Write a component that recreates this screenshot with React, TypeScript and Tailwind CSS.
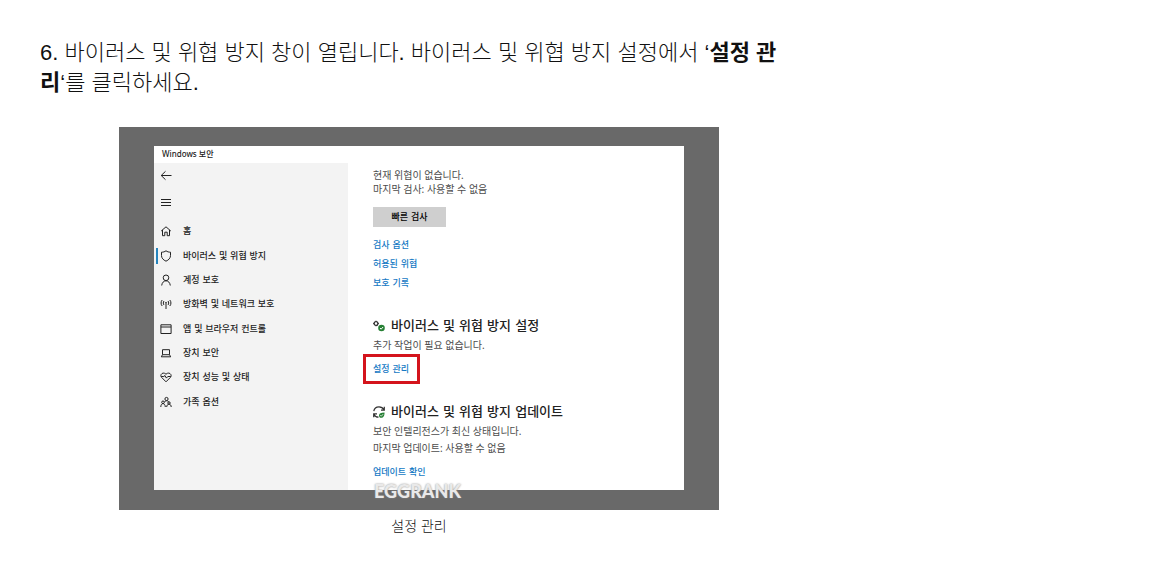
import React from 'react';

interface NavItem {
    label: string;
    icon: React.ReactNode;
    active?: boolean;
}

const Icon: React.FC<{ children: React.ReactNode }> = ({ children }) => (
    <svg
        viewBox="0 0 12 12"
        className="h-3 w-3 shrink-0"
        fill="none"
        stroke="currentColor"
        strokeWidth="1"
        aria-hidden="true"
    >
        {children}
    </svg>
);

const navItems: NavItem[] = [
    { label: '홈', icon: <Icon><path d="M1.2 6 6 1.8 10.8 6M2.5 5v5.7h2.3V7.2h2.4v3.5h2.3V5" /></Icon> },
    {
        label: '바이러스 및 위협 방지',
        active: true,
        icon: <Icon><path d="M6 .8c1.4 1 2.8 1.4 4.5 1.4v3.3c0 2.6-1.8 4.5-4.5 5.7-2.7-1.2-4.5-3.1-4.5-5.7V2.2C3.2 2.2 4.6 1.8 6 .8Z" /></Icon>,
    },
    { label: '계정 보호', icon: <Icon><circle cx="6" cy="3.8" r="2.8" /><path d="M1.7 11.5c.3-2.8 2-4.7 4.3-4.7s4 1.9 4.3 4.7" /></Icon> },
    {
        label: '방화벽 및 네트워크 보호',
        icon: <Icon><path d="M2.2 2C.7 3.5.7 6.5 2.2 8M4 3c-.9 1.2-.9 3 0 4M9.8 2c1.5 1.5 1.5 4.5 0 6M8 3c.9 1.2.9 3 0 4M6 5.5V11" /><circle cx="6" cy="4.8" r=".5" /></Icon>,
    },
    { label: '앱 및 브라우저 컨트롤', icon: <Icon><path d="M.9 1.8h10.2v8.7H.9ZM.9 4h10.2" /></Icon> },
    { label: '장치 보안', icon: <Icon><path d="M2.5 2.7h7v5h-7ZM1.2 9.8h9.6M2.5 7.7 1.3 9.8M9.5 7.7l1.2 2.1" /></Icon> },
    {
        label: '장치 성능 및 상태',
        icon: <Icon><path d="M6 10.8 1.5 6.3C-.5 3.8 2.8.2 6 3.2c3.2-3 6.5.6 4.5 3.1ZM1.2 5.5h2.6l1.2-1 1.4 2.6 1.4-1.6h3" /></Icon>,
    },
    {
        label: '가족 옵션',
        icon: <Icon><circle cx="6.5" cy="3" r="1.6" /><circle cx="3" cy="6.3" r="1.3" /><circle cx="9" cy="7" r="1.2" /><path d="M.8 11c0-2 .9-3.4 2.2-3.4S5.3 9 5.3 11M4.6 6.2c.5-1 1.1-1.5 1.9-1.5 1.2 0 2 .7 2.4 1.5M6.7 11c0-1.8 1-2.8 2.3-2.8s2.2 1 2.2 2.8" /></Icon>,
    },
];

const linkClass = "self-start text-[9px] leading-[19px] font-medium text-[#1479c4] font-['DejaVu_Sans','Noto_Sans_CJK_KR',sans-serif]";

const Sidebar: React.FC = () => (
    <aside className="flex w-[194px] shrink-0 flex-col bg-[#f3f3f3]">
        <button type="button" aria-label="뒤로" className="ml-1.5 flex h-6 w-6 items-center px-0">
            <Icon><path d="M11.5 6.5H1.2M5.5 2.3 1.2 6.5l4.3 4.2" /></Icon>
        </button>
        <button type="button" aria-label="메뉴" className="mt-1 ml-1.5 flex h-6 w-6 items-center px-0">
            <Icon><path d="M1 2.5h10M1 5.5h10M1 8.5h10" /></Icon>
        </button>
        <nav className="mt-1 flex flex-1 flex-col pb-[76px]">
            {navItems.map((item) => (
                <a
                    key={item.label}
                    href="#"
                    className="flex flex-1 items-center text-[9px] leading-4 font-medium"
                >
                    <span className={`ml-0.5 h-4 w-0.5 ${item.active ? 'bg-[#2584bd]' : ''}`} />
                    <span className="mr-[11px] ml-0.5">{item.icon}</span>
                    {item.label}
                </a>
            ))}
        </nav>
    </aside>
);

const SecurityPanel: React.FC = () => (
    <main className="flex min-w-0 flex-1 flex-col bg-white pt-[5px] pb-2 pl-[25px] text-[10px] leading-[14px] text-[#4c4c4c] font-['Noto_Sans','Noto_Sans_CJK_KR',sans-serif]">
        <p>현재 위협이 없습니다.</p>
        <p>마지막 검사: 사용할 수 없음</p>
        <button
            type="button"
            className="mt-[11px] h-5 w-[73px] bg-[#cfcfcf] text-[9px] font-medium text-black font-['DejaVu_Sans','Noto_Sans_CJK_KR',sans-serif]"
        >
            빠른 검사
        </button>
        <div className="mt-[9px] flex flex-col">
            <a href="#" className={linkClass}>검사 옵션</a>
            <a href="#" className={linkClass}>허용된 위협</a>
            <a href="#" className={linkClass}>보호 기록</a>
        </div>

        <h2 className="mt-[23px] flex items-center gap-1.5 text-[13px] leading-5 font-medium text-[#222] font-['DejaVu_Sans','Noto_Sans_CJK_KR',sans-serif]">
            <svg viewBox="0 0 12 12" className="h-3 w-3" fill="none" aria-hidden="true">
                <circle cx="3" cy="3.5" r="1.9" stroke="#333" strokeWidth="1.3" />
                <path d="M3 .7v1M3 5.3v1M.2 3.5h1M4.9 3.5h1" stroke="#333" />
                <circle cx="8.5" cy="8" r="3.3" fill="#268034" />
                <path d="m7 8 1.1 1.2 2-2.2" stroke="#fff" />
            </svg>
            바이러스 및 위협 방지 설정
        </h2>
        <p className="mt-0.5">추가 작업이 필요 없습니다.</p>
        <div className="mt-0.5 -ml-2.5 flex h-[30px] w-[57px] items-center border-[3px] border-[#d4141c] pl-[7px]">
            <span className="flex">
                <a href="#" className={linkClass}>설정 관리</a>
            </span>
        </div>

        <h2 className="mt-[18px] flex items-center gap-1.5 text-[13px] leading-5 font-medium text-[#222] font-['DejaVu_Sans','Noto_Sans_CJK_KR',sans-serif]">
            <svg viewBox="0 0 12 12" className="h-3 w-3" fill="none" aria-hidden="true">
                <path d="M.8 5.2C1.2 2.5 3.3.8 6 .8c2.3 0 4 1.2 4.9 3M11.3.8v3.3H8M5.5 11.2C3.4 11.2 1.7 10 .9 8.2M.7 11.3V7.9H4" stroke="#333" strokeWidth="1.2" />
                <path d="M6 9.5C6 7.3 8 6.5 11.5 6.5c.2 3-1 5.3-3.5 5.3-1.2 0-2-.8-2-2.3Z" fill="#268034" />
                <path d="m7.3 9.2 1 1 1.8-2" stroke="#fff" strokeWidth=".8" />
            </svg>
            바이러스 및 위협 방지 업데이트
        </h2>
        <p className="mt-0.5">보안 인텔리전스가 최신 상태입니다.</p>
        <p className="mt-[3px]">마지막 업데이트: 사용할 수 없음</p>
        <a href="#" className={`mt-2 ${linkClass}`}>업데이트 확인</a>
    </main>
);

export default function App() {
    return (
        <article className="max-w-[838px] bg-white px-10 pt-[38px] pb-6 text-[#111] font-['Liberation_Sans','Noto_Sans_CJK_KR',sans-serif]">
            <p className="pr-4 text-[22px] leading-[30px] font-light">
                6. 바이러스 및 위협 방지 창이 열립니다. 바이러스 및 위협 방지 설정에서 ‘<strong className="font-bold">설정 관리</strong>‘를 클릭하세요.
            </p>

            <figure className="mx-auto mt-[29px] max-w-[600px]">
                <div className="relative bg-[#696969] px-[35px] pt-[19px] pb-5">
                    <div className="bg-white text-[#222] font-['DejaVu_Sans','Noto_Sans_CJK_KR',sans-serif]">
                        <header className="h-[17px] pl-2 text-[8px] leading-4 font-medium font-['Noto_Sans','Noto_Sans_CJK_KR',sans-serif]">
                            Windows 보안
                        </header>
                        <div className="flex">
                            <Sidebar />
                            <SecurityPanel />
                        </div>
                    </div>
                    <span className="absolute bottom-[9px] left-[255px] text-[18px] leading-5 font-black text-[#e9e9e9] [text-shadow:0_0_2px_#888] font-['Lato',sans-serif]">
                        EGGRANK
                    </span>
                </div>
                <figcaption className="mt-1.5 text-center text-[14px] leading-5 font-light">설정 관리</figcaption>
            </figure>
        </article>
    );
}
